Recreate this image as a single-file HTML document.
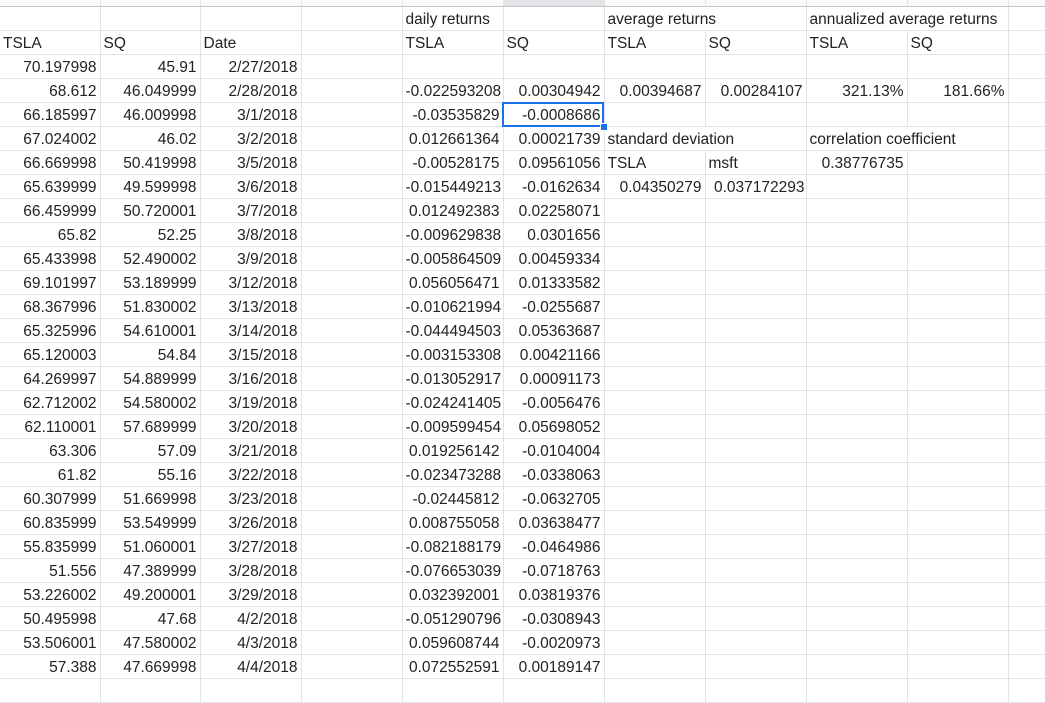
<!DOCTYPE html>
<html><head><meta charset="utf-8"><style>
body{margin:0;width:1045px;height:682px;overflow:hidden;background:#fff;position:relative}
table{border-collapse:collapse;table-layout:fixed;width:1045px;font:15.5px "Liberation Sans",Arial,sans-serif;color:#222}
td{border-right:1px solid #e2e3e3;border-bottom:1px solid #e2e3e3;height:21px;padding:2px 3px 0 3px;white-space:nowrap;overflow:hidden;text-align:right;line-height:21px}
td.l{text-align:left}
tr.h td{height:6px;background:#f8f9fa;border-bottom:1px solid #c4c7c5;padding:0;line-height:6px;font-size:1px}
tr.h td.s{background:#e1e3e6}
#sel{position:absolute;left:502px;top:102px;width:98px;height:21px;border:2px solid #1a73e8}
#sq{position:absolute;left:600px;top:123px;width:6px;height:6px;background:#1a73e8;border:1px solid #fff}
</style></head><body>
<table>
<colgroup><col style="width:100px"><col style="width:100px"><col style="width:101px"><col style="width:101px"><col style="width:101px"><col style="width:101px"><col style="width:101px"><col style="width:101px"><col style="width:101px"><col style="width:101px"><col style="width:37px"></colgroup>
<tr class="h"><td></td><td></td><td></td><td></td><td></td><td class="s"></td><td></td><td></td><td></td><td></td><td></td></tr>
<tr><td></td><td></td><td></td><td></td><td class="l">daily returns</td><td></td><td class="l" colspan="2">average returns</td><td class="l" colspan="2">annualized average returns</td><td></td></tr>
<tr><td class="l">TSLA</td><td class="l">SQ</td><td class="l">Date</td><td></td><td class="l">TSLA</td><td class="l">SQ</td><td class="l">TSLA</td><td class="l">SQ</td><td class="l">TSLA</td><td class="l">SQ</td><td></td></tr>
<tr><td>70.197998</td><td>45.91</td><td>2/27/2018</td><td></td><td></td><td></td><td></td><td></td><td></td><td></td><td></td></tr>
<tr><td>68.612</td><td>46.049999</td><td>2/28/2018</td><td></td><td class="l">-0.022593208</td><td>0.00304942</td><td>0.00394687</td><td>0.00284107</td><td>321.13%</td><td>181.66%</td><td></td></tr>
<tr><td>66.185997</td><td>46.009998</td><td>3/1/2018</td><td></td><td>-0.03535829</td><td>-0.0008686</td><td></td><td></td><td></td><td></td><td></td></tr>
<tr><td>67.024002</td><td>46.02</td><td>3/2/2018</td><td></td><td>0.012661364</td><td>0.00021739</td><td class="l" colspan="2">standard deviation</td><td class="l" colspan="2">correlation coefficient</td><td></td></tr>
<tr><td>66.669998</td><td>50.419998</td><td>3/5/2018</td><td></td><td>-0.00528175</td><td>0.09561056</td><td class="l">TSLA</td><td class="l">msft</td><td>0.38776735</td><td></td><td></td></tr>
<tr><td>65.639999</td><td>49.599998</td><td>3/6/2018</td><td></td><td class="l">-0.015449213</td><td>-0.0162634</td><td>0.04350279</td><td style="padding:2px 1px 0 1px">0.037172293</td><td></td><td></td><td></td></tr>
<tr><td>66.459999</td><td>50.720001</td><td>3/7/2018</td><td></td><td>0.012492383</td><td>0.02258071</td><td></td><td></td><td></td><td></td><td></td></tr>
<tr><td>65.82</td><td>52.25</td><td>3/8/2018</td><td></td><td class="l">-0.009629838</td><td>0.0301656</td><td></td><td></td><td></td><td></td><td></td></tr>
<tr><td>65.433998</td><td>52.490002</td><td>3/9/2018</td><td></td><td class="l">-0.005864509</td><td>0.00459334</td><td></td><td></td><td></td><td></td><td></td></tr>
<tr><td>69.101997</td><td>53.189999</td><td>3/12/2018</td><td></td><td>0.056056471</td><td>0.01333582</td><td></td><td></td><td></td><td></td><td></td></tr>
<tr><td>68.367996</td><td>51.830002</td><td>3/13/2018</td><td></td><td class="l">-0.010621994</td><td>-0.0255687</td><td></td><td></td><td></td><td></td><td></td></tr>
<tr><td>65.325996</td><td>54.610001</td><td>3/14/2018</td><td></td><td class="l">-0.044494503</td><td>0.05363687</td><td></td><td></td><td></td><td></td><td></td></tr>
<tr><td>65.120003</td><td>54.84</td><td>3/15/2018</td><td></td><td class="l">-0.003153308</td><td>0.00421166</td><td></td><td></td><td></td><td></td><td></td></tr>
<tr><td>64.269997</td><td>54.889999</td><td>3/16/2018</td><td></td><td class="l">-0.013052917</td><td>0.00091173</td><td></td><td></td><td></td><td></td><td></td></tr>
<tr><td>62.712002</td><td>54.580002</td><td>3/19/2018</td><td></td><td class="l">-0.024241405</td><td>-0.0056476</td><td></td><td></td><td></td><td></td><td></td></tr>
<tr><td>62.110001</td><td>57.689999</td><td>3/20/2018</td><td></td><td class="l">-0.009599454</td><td>0.05698052</td><td></td><td></td><td></td><td></td><td></td></tr>
<tr><td>63.306</td><td>57.09</td><td>3/21/2018</td><td></td><td>0.019256142</td><td>-0.0104004</td><td></td><td></td><td></td><td></td><td></td></tr>
<tr><td>61.82</td><td>55.16</td><td>3/22/2018</td><td></td><td class="l">-0.023473288</td><td>-0.0338063</td><td></td><td></td><td></td><td></td><td></td></tr>
<tr><td>60.307999</td><td>51.669998</td><td>3/23/2018</td><td></td><td>-0.02445812</td><td>-0.0632705</td><td></td><td></td><td></td><td></td><td></td></tr>
<tr><td>60.835999</td><td>53.549999</td><td>3/26/2018</td><td></td><td>0.008755058</td><td>0.03638477</td><td></td><td></td><td></td><td></td><td></td></tr>
<tr><td>55.835999</td><td>51.060001</td><td>3/27/2018</td><td></td><td class="l">-0.082188179</td><td>-0.0464986</td><td></td><td></td><td></td><td></td><td></td></tr>
<tr><td>51.556</td><td>47.389999</td><td>3/28/2018</td><td></td><td class="l">-0.076653039</td><td>-0.0718763</td><td></td><td></td><td></td><td></td><td></td></tr>
<tr><td>53.226002</td><td>49.200001</td><td>3/29/2018</td><td></td><td>0.032392001</td><td>0.03819376</td><td></td><td></td><td></td><td></td><td></td></tr>
<tr><td>50.495998</td><td>47.68</td><td>4/2/2018</td><td></td><td class="l">-0.051290796</td><td>-0.0308943</td><td></td><td></td><td></td><td></td><td></td></tr>
<tr><td>53.506001</td><td>47.580002</td><td>4/3/2018</td><td></td><td>0.059608744</td><td>-0.0020973</td><td></td><td></td><td></td><td></td><td></td></tr>
<tr><td>57.388</td><td>47.669998</td><td>4/4/2018</td><td></td><td>0.072552591</td><td>0.00189147</td><td></td><td></td><td></td><td></td><td></td></tr>
<tr><td></td><td></td><td></td><td></td><td></td><td></td><td></td><td></td><td></td><td></td><td></td></tr>
</table>
<div id="sel"></div><div id="sq"></div>
</body></html>
